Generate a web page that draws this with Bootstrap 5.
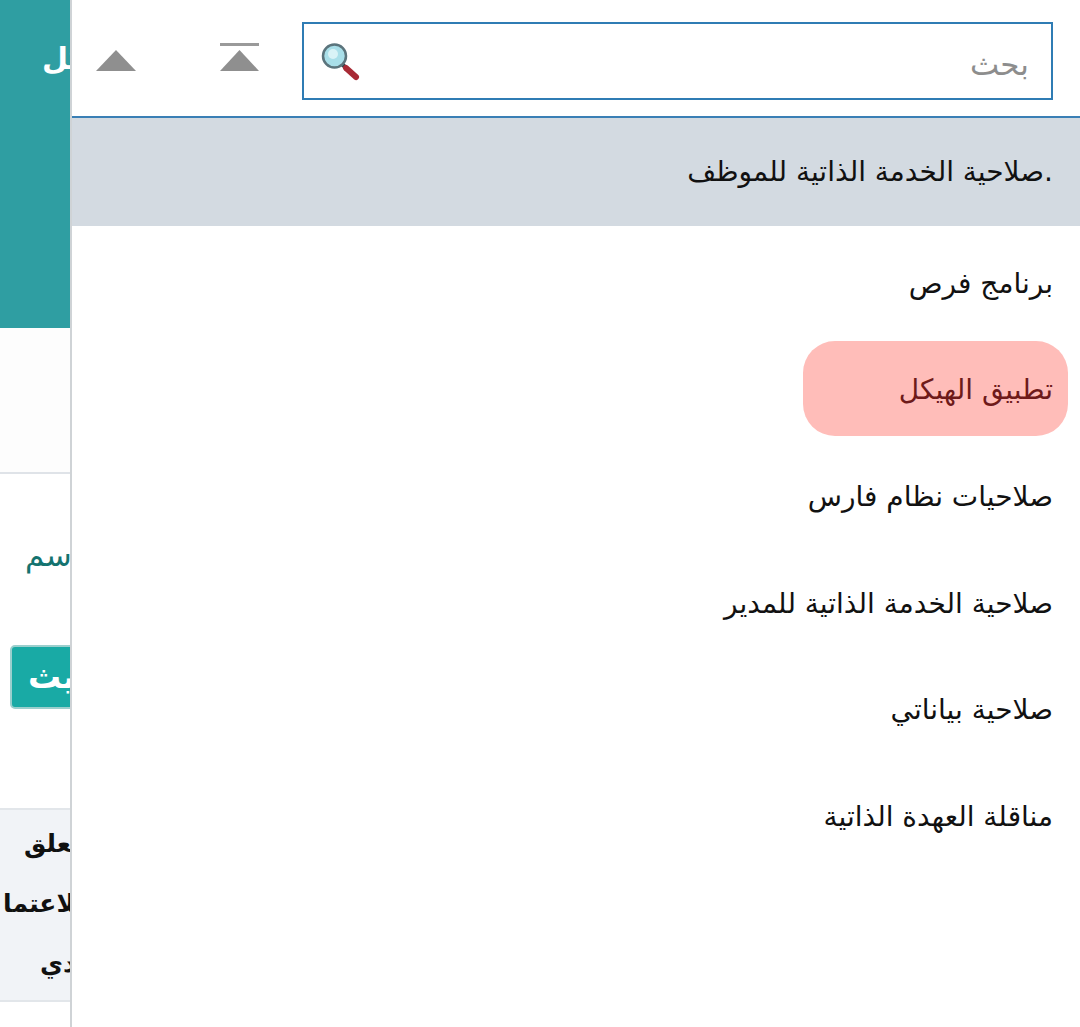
<!DOCTYPE html>
<html lang="ar">
<head>
<meta charset="utf-8">
<title>Menu</title>
<link href="https://cdn.jsdelivr.net/npm/bootstrap@5.3.0/dist/css/bootstrap.min.css" rel="stylesheet">
<style>
html,body{margin:0;height:1027px;overflow:hidden;background:#fff}
body{font-family:"DejaVu Sans","Noto Sans",sans-serif}
.page{height:1027px;width:1080px}
.bg-head{height:328px;background:#2f9ea2;color:#fff;font-size:30px;font-weight:700;padding:36px 0 0 42px;text-align:left}
.bg-blank{height:146px;border-bottom:2px solid #dfe3e8;background:#fdfdfd}
.bg-form{height:334px;padding-top:56px}
.bg-label{color:#14736f;font-size:31px;line-height:50px;text-align:left;padding-left:25px;margin-bottom:65px}
.bg-btn{margin-left:10px;width:90px;height:64px;background:#19aaa5;border:2px solid #9bcfcd;border-radius:5px;color:#fff;font-size:33px;font-weight:700;padding-left:16px}
.bg-th{height:194px;background:#f1f3f7;border-top:2px solid #e2e6ea;border-bottom:2px solid #e2e6ea;font-size:25px;font-weight:700;color:#111;line-height:60px;padding-top:4px}
.bg-th div{text-align:left}
.l1{padding-left:24px}.l2{padding-left:3px}.l3{padding-left:40px}
.panel{position:absolute;top:0;left:70px;right:0;bottom:0;background:#fff;border-left:2px solid #cfd3d6}
.panel-top{height:118px;border-bottom:2px solid #3a7fb5;padding:22px 27px 0 0}
.tool{width:40px;height:60px}
.tool svg{display:block}
.tool-1{margin-left:24px}
.tool-2{margin-left:84px;margin-right:42px}
.search{width:751px;height:78px;border:2px solid #2f7cb4;padding:0 20px 0 16px}
.search input{border:0;outline:0;background:transparent;font-size:31px;color:#333;text-align:right;font-family:inherit;padding-top:8px}
.search input::placeholder{color:#8d8d8d;opacity:1}
.menu-item{border:0;border-radius:0;background:transparent;color:#111;font-size:28px;line-height:38px;padding:10px 27px 0 0;height:106.5px;display:flex;align-items:center;justify-content:flex-start}
.menu-item.current{height:108px;padding-top:0;background:#d3dae1;color:#111}
.menu-item.has-pill{padding:6px 0 0 0}
.pill{display:flex;align-items:center;height:95px;width:265px;margin-right:12px;padding:3px 15px 0 0;border-radius:32px;background:#ffbdb9;color:#6e1a1a}
</style>
</head>
<body>
<main class="page" dir="rtl">
  <div class="bg-head">تعديل الهيكل</div>
  <div class="bg-blank"></div>
  <div class="bg-form">
    <div class="bg-label">الأسم</div>
    <div class="d-flex justify-content-end"><div class="bg-btn d-flex align-items-center justify-content-end">تحديث</div></div>
  </div>
  <div class="bg-th">
    <div class="l1">المعلق</div>
    <div class="l2">للاعتما</div>
    <div class="l3">سدي</div>
  </div>
</main>
<aside class="panel" dir="rtl">
  <div class="panel-top d-flex align-items-start">
    <div class="search d-flex align-items-center">
      <input class="flex-grow-1 w-100" type="text" placeholder="بحث" aria-label="بحث">
      <svg class="flex-shrink-0" width="40" height="40" viewBox="0 0 40 40" aria-hidden="true">
        <line x1="21" y1="22" x2="27" y2="28" stroke="#33424a" stroke-width="4"/>
        <line x1="26" y1="27" x2="36" y2="36" stroke="#a82a35" stroke-width="6" stroke-linecap="round"/>
        <circle cx="14.5" cy="15" r="11.5" fill="#a9dfe9" stroke="#5b747c" stroke-width="2.5"/>
        <circle cx="13" cy="13" r="5" fill="#d9f3f7"/>
      </svg>
    </div>
    <div class="tool tool-2">
      <svg width="40" height="60" viewBox="0 0 40 60" aria-hidden="true"><rect x="0" y="21" width="39" height="3" fill="#9a9a9a"/><polygon points="19.5,28 39,49 0,49" fill="#8f8f8f"/></svg>
    </div>
    <div class="tool tool-1">
      <svg width="40" height="60" viewBox="0 0 40 60" aria-hidden="true"><polygon points="20,28 40,49 0,49" fill="#8f8f8f"/></svg>
    </div>
  </div>
  <div class="list-group list-group-flush">
    <a class="list-group-item menu-item current" href="#">&lrm;.صلاحية الخدمة الذاتية للموظف</a>
    <a class="list-group-item menu-item" href="#">برنامج فرص</a>
    <a class="list-group-item menu-item has-pill" href="#"><span class="pill">تطبيق الهيكل</span></a>
    <a class="list-group-item menu-item" href="#">صلاحيات نظام فارس</a>
    <a class="list-group-item menu-item" href="#">صلاحية الخدمة الذاتية للمدير</a>
    <a class="list-group-item menu-item" href="#">صلاحية بياناتي</a>
    <a class="list-group-item menu-item" href="#">مناقلة العهدة الذاتية</a>
  </div>
</aside>
<script src="https://cdn.jsdelivr.net/npm/bootstrap@5.3.0/dist/js/bootstrap.bundle.min.js"></script>
</body>
</html>
